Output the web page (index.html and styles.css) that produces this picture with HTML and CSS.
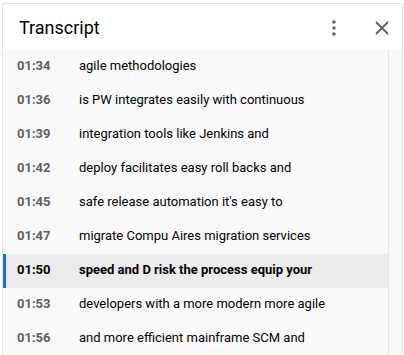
FILE: index.html
```html
<!DOCTYPE html>
<html>
<head>
<meta charset="utf-8">
<link rel="stylesheet" href="styles.css">
</head>
<body>
<div class="panel">
  <div class="header">
    <div class="title">Transcript</div>
    <div class="actions">
      <svg class="more" width="4" height="16" viewBox="0 0 4 16"><circle cx="2" cy="2" r="1.7" fill="#606060"/><circle cx="2" cy="8" r="1.7" fill="#606060"/><circle cx="2" cy="14" r="1.7" fill="#606060"/></svg>
      <svg class="close" width="14" height="14" viewBox="0 0 14 14"><path d="M1 1 L13 13 M13 1 L1 13" stroke="#606060" stroke-width="1.8" fill="none"/></svg>
    </div>
  </div>
  <div class="body">
    <div class="list">
      <div class="row"><span class="time">01:34</span><span class="text">agile methodologies</span></div>
      <div class="row"><span class="time">01:36</span><span class="text">is PW integrates easily with continuous</span></div>
      <div class="row"><span class="time">01:39</span><span class="text">integration tools like Jenkins and</span></div>
      <div class="row"><span class="time">01:42</span><span class="text">deploy facilitates easy roll backs and</span></div>
      <div class="row"><span class="time">01:45</span><span class="text">safe release automation it's easy to</span></div>
      <div class="row"><span class="time">01:47</span><span class="text">migrate Compu Aires migration services</span></div>
      <div class="row active"><span class="time">01:50</span><span class="text">speed and D risk the process equip your</span></div>
      <div class="row"><span class="time">01:53</span><span class="text">developers with a more modern more agile</span></div>
      <div class="row"><span class="time">01:56</span><span class="text">and more efficient mainframe SCM and</span></div>
    </div>
    <div class="track"></div>
  </div>
</div>
</body>
</html>
```

FILE: styles.css
```css
html, body {
  margin: 0;
  padding: 0;
  background: #fff;
}
body {
  font-family: Roboto, "Liberation Sans", Arial, sans-serif;
  overflow: hidden;
}
.panel {
  margin: 3px 0 0 2px;
  width: 399px;
  height: 352px;
  border: 1px solid #e3e3e3;
  border-bottom: none;
  box-sizing: content-box;
  display: flex;
  flex-direction: column;
  background: #fff;
  overflow: hidden;
}
.header {
  height: 46px;
  flex: none;
  display: flex;
  align-items: center;
  justify-content: space-between;
  padding: 0 0 0 16px;
}
.title {
  font-size: 18px;
  color: #030303;
  padding-top: 1px;
}
.actions {
  display: flex;
  align-items: center;
  padding-top: 1px;
}
.more {
  display: block;
  margin-right: 39px;
}
.close {
  display: block;
  margin-right: 13px;
}
.body {
  flex: 1;
  display: flex;
  background: #f9f9f9;
}
.list {
  width: 385px;
  flex: none;
}
.track {
  flex: 1;
  border-left: 1px solid #e6e6e6;
}
.row {
  box-sizing: border-box;
  height: 34px;
  display: flex;
  align-items: center;
  padding: 0 0 3px 11px;
  border-left: 3px solid transparent;
}
.row .time {
  width: 62px;
  flex: none;
  font-size: 13px;
  font-weight: 700;
  color: #606060;
}
.row .text {
  font-size: 13px;
  color: #030303;
  white-space: nowrap;
}
.row.active {
  background: #ebebeb;
  border-left-color: #1a6fd8;
}
.row.active .time {
  color: #030303;
}
.row.active .text {
  font-weight: 700;
}
```
